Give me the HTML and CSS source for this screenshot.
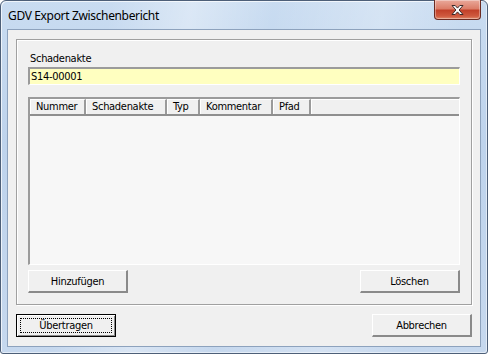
FILE: index.html
```html
<!DOCTYPE html>
<html lang="de">
<head>
<meta charset="utf-8">
<title>GDV Export Zwischenbericht</title>
<link rel="stylesheet" href="styles.css">
</head>
<body>
<div class="window">
  <div class="titlebar">
    <span class="title">GDV Export Zwischenbericht</span>
    <div class="close" aria-label="Schließen">
      <svg width="17" height="12" viewBox="0 0 17 12">
        <path d="M3 1.5h3.2l2.3 2.6 2.3-2.6H14l-3.9 4.5 3.9 4.5h-3.2L8.5 7.9 6.2 10.5H3l3.9-4.5z" fill="#fff" stroke="#3b2a2a" stroke-width="1" stroke-linejoin="round"/>
      </svg>
    </div>
  </div>
  <div class="client">
    <div class="group">
      <div class="label">Schadenakte</div>
      <div class="textbox">S14-00001</div>
      <div class="listview">
        <div class="lv-header">
          <div class="hcell w-nummer">Nummer</div>
          <div class="hcell w-akte">Schadenakte</div>
          <div class="hcell w-typ">Typ</div>
          <div class="hcell w-komm">Kommentar</div>
          <div class="hcell w-pfad">Pfad</div>
          <div class="hcell hfill"></div>
        </div>
        <div class="lv-body"></div>
      </div>
      <div class="btnrow">
        <div class="btn">Hinzufügen</div>
        <div class="btn">Löschen</div>
      </div>
    </div>
    <div class="dlgbtns">
      <div class="btn default"><span class="focus">Übertragen</span></div>
      <div class="btn">Abbrechen</div>
    </div>
  </div>
</div>
</body>
</html>
```

FILE: styles.css
```css
* { box-sizing: border-box; }
html, body { margin: 0; padding: 0; background: #ffffff; }

.window {
  width: 488px;
  height: 354px;
  border: 1px solid #4d5f78;
  border-radius: 6px 6px 3px 3px;
  padding: 0 6px 6px 6px;
  display: flex;
  flex-direction: column;
  background:
    linear-gradient(100deg, rgba(255,255,255,0) 20%, rgba(255,255,255,0.35) 35%, rgba(255,255,255,0) 50%, rgba(255,255,255,0.25) 70%, rgba(255,255,255,0) 85%),
    linear-gradient(180deg, #c9dcf1 0%, #bed3ec 40%, #c6d8ee 100%);
  box-shadow: inset 1px 1px 0 rgba(255,255,255,0.7), inset -1px -1px 0 rgba(255,255,255,0.5);
}

.titlebar {
  height: 28px;
  display: flex;
  align-items: flex-start;
  justify-content: space-between;
}

.title {
  font-family: "Noto Sans", sans-serif;
  font-size: 12px;
  letter-spacing: -0.35px;
  color: #000;
  padding-left: 1px;
  margin-top: 6px;
  line-height: 17px;
}

.close {
  width: 47px;
  height: 20px;
  margin-top: -1px;
  border: 1px solid #6b2b22;
  border-top: none;
  border-radius: 0 0 4px 4px;
  background: linear-gradient(180deg, #e9a99b 0%, #dc7e69 45%, #c2412a 55%, #cf5a3f 85%, #e08b6c 100%);
  box-shadow: inset 0 0 0 1px rgba(255,255,255,0.35);
  display: flex;
  align-items: center;
  justify-content: center;
}

.client {
  flex: 1;
  border: 1px solid #8da2bd;
  background: #f0f0f0;
  padding: 9px 8px 0 8px;
  font-family: "DejaVu Sans Condensed", "DejaVu Sans", sans-serif;
  font-size: 11px;
  letter-spacing: -0.3px;
  color: #000;
}

.group {
  height: 266px;
  border: 1px solid #a0a0a0;
  box-shadow: 1px 1px 0 #fff, inset 1px 1px 0 #fff;
  padding: 12px 11px 0 11px;
  display: flex;
  flex-direction: column;
}

.label {
  height: 13px;
  line-height: 13px;
  padding-left: 2px;
}

.textbox {
  margin-top: 2px;
  height: 18px;
  background: #ffffc0;
  border-top: 2px solid #9b9b9b;
  border-left: 2px solid #9b9b9b;
  border-bottom: 1px solid #fff;
  border-right: 1px solid #fff;
  padding-left: 1px;
  line-height: 15px;
}

.listview {
  margin-top: 12px;
  height: 168px;
  border-top: 2px solid #9b9b9b;
  border-left: 2px solid #9b9b9b;
  border-bottom: 1px solid #fff;
  border-right: 1px solid #fff;
  background: #f7f7f7;
  display: flex;
  flex-direction: column;
}

.lv-header {
  height: 17px;
  display: flex;
  background: #f0f0f0;
  border-bottom: 2px solid #8f8f8f;
}

.hcell {
  height: 15px;
  line-height: 14px;
  padding-left: 5px;
  border-left: 1px solid #fff;
  border-top: 1px solid #fff;
  border-right: 2px solid #9a9a9a;
  white-space: nowrap;
}
.w-nummer { width: 56px; }
.w-akte { width: 81px; }
.w-typ { width: 33px; }
.w-komm { width: 73px; }
.w-pfad { width: 38px; }
.hfill { flex: 1; border-right: none; }

.lv-body { flex: 1; }

.btnrow {
  margin-top: 5px;
  display: flex;
  justify-content: space-between;
}

.btn {
  width: 100px;
  height: 23px;
  background: #f0f0f0;
  border-top: 1px solid #fff;
  border-left: 1px solid #fff;
  border-right: 2px solid #8a8a8a;
  border-bottom: 2px solid #8a8a8a;
  display: flex;
  align-items: center;
  justify-content: center;
  line-height: 13px;
  padding-top: 1px;
}

.dlgbtns {
  margin-top: 9px;
  display: flex;
  justify-content: space-between;
}

.btn.default {
  border: 1px solid #000;
  box-shadow: inset 1px 1px 0 #fff, inset -1px -1px 0 #8a8a8a;
  padding: 3px;
}
.btn.default .focus {
  flex: 1;
  align-self: stretch;
  border: 1px dotted #000;
  display: flex;
  align-items: center;
  justify-content: center;
}
```
